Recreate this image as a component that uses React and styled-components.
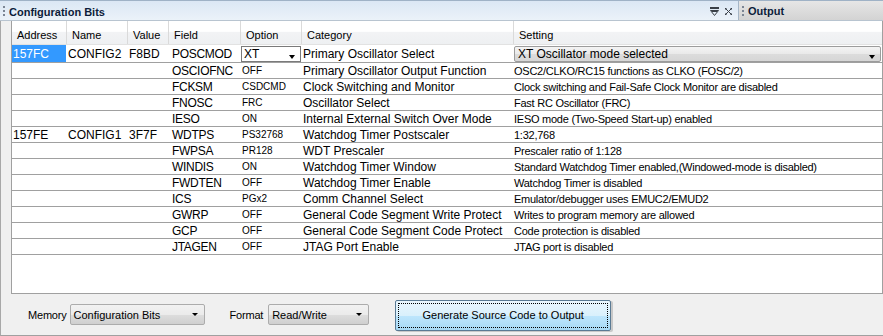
import React from 'react';
import styled, { createGlobalStyle } from 'styled-components';

const Global = createGlobalStyle`
  html, body { margin: 0; padding: 0; background: #f0f0f0; }
  body { font-family: "Liberation Sans", Arial, sans-serif; color: #000; }
  * { box-sizing: border-box; }
`;

const COLS = '54px 61px 41px 72px 61px 212px 1fr';
const PADS = [1, 2, 2, 4, 2, 2, 1];

const Frame = styled.div`
  width: 883px;
  height: 336px;
  background: #f0f0f0;
  display: flex;
  flex-direction: column;
  overflow: hidden;
`;

const TitleRow = styled.div`
  display: flex;
  height: 21px;
  border-top: 1px solid #9fb2c6;
  border-bottom: 1px solid #b8c4d0;
`;

const DockTitle = styled.div`
  flex: 1;
  display: flex;
  align-items: center;
  padding: 2px 0 0 3px;
  background: linear-gradient(#dbe7f4, #ebf2f9);
`;

const OutputTab = styled.div`
  width: 145px;
  display: flex;
  align-items: center;
  padding: 1px 0 0 3px;
  border-left: 1px solid #a6b6c6;
  background: linear-gradient(#e6e6e6, #d3d3d3);
`;

const TitleText = styled.span`
  font-size: 11px;
  font-weight: bold;
  color: #0c1c3a;
  margin-left: 3px;
`;

const TitleIcons = styled.div`
  margin-left: auto;
  margin-right: 6px;
  display: flex;
  align-items: center;
  gap: 6px;
`;

const Body = styled.div`
  display: flex;
  height: 273px;
`;

const LeftStrip = styled.div`
  width: 11px;
  border-left: 1px solid #a8a8a8;
  background: #f0f0f0;
`;

const TablePanel = styled.div`
  flex: 1;
  background: #fff;
  border-left: 1px solid #a0a0a0;
  border-right: 1px solid #a0a0a0;
  border-bottom: 1px solid #a0a0a0;
  display: flex;
  flex-direction: column;
`;

const HeaderRow = styled.div`
  display: grid;
  grid-template-columns: ${COLS};
  height: 24px;
  border-bottom: 1px solid #e2e2e2;
  background: linear-gradient(#ffffff 0%, #ffffff 45%, #f2f3f5 50%, #eef0f2 100%);
`;

const HeaderCell = styled.div`
  font-size: 11px;
  line-height: 13px;
  padding: 8px 0 0 5px;
  border-left: ${p => (p.$first ? 'none' : '1px solid #dadada')};
  white-space: nowrap;
`;

const Row = styled.div`
  display: grid;
  grid-template-columns: ${COLS};
  height: ${p => (p.$tall ? 18 : 16)}px;
  border-bottom: 1px solid #a0a0a0;
`;

const Cell = styled.div`
  display: flex;
  align-items: center;
  padding-left: ${p => p.$pad}px;
  font-size: ${p => p.$size || 12}px;
  letter-spacing: ${p => p.$ls || 0}px;
  white-space: nowrap;
  overflow: hidden;
  background: ${p => (p.$selected ? '#3399ff' : 'transparent')};
  color: ${p => (p.$selected ? '#fff' : '#000')};
`;

const OptionCombo = styled.div`
  flex: 1;
  align-self: stretch;
  margin: 1px 0 0 1px;
  display: flex;
  align-items: center;
  padding-left: 2px;
  background: #fff;
  border: 1px solid #7a7a7a;
  font-size: 12px;
`;

const SettingCombo = styled.div`
  flex: 1;
  align-self: stretch;
  margin: 1px 1px 0 1px;
  display: flex;
  align-items: center;
  padding-left: 3px;
  background: linear-gradient(#f4f4f4, #e9e9e9 50%, #dcdcdc 51%, #d6d6d6);
  border: 1px solid #9c9c9c;
  border-radius: 2px;
  font-size: 12px;
`;

const Arrow = styled.span`
  margin-left: auto;
  margin-right: ${p => p.$mr || 5}px;
  align-self: ${p => (p.$low ? 'flex-end' : 'center')};
  margin-bottom: ${p => (p.$low ? 2 : 0)}px;
  width: 0;
  height: 0;
  border-left: ${p => p.$w / 2}px solid transparent;
  border-right: ${p => p.$w / 2}px solid transparent;
  border-top: ${p => p.$h}px solid #000;
`;

const BottomBar = styled.div`
  height: 42px;
  display: flex;
  align-items: center;
  padding-left: 27px;
  border-left: 1px solid #a8a8a8;
  border-bottom: 1px solid #a0a0a0;
`;

const Label = styled.span`
  font-size: 11px;
  letter-spacing: -0.2px;
  margin-right: ${p => p.$mr}px;
`;

const Select = styled.div`
  width: ${p => p.$w}px;
  height: 21px;
  margin-right: ${p => p.$mr}px;
  display: flex;
  align-items: center;
  padding-left: 3px;
  font-size: 11px;
  background: linear-gradient(#f2f2f2, #ebebeb 50%, #dddddd 51%, #cfcfcf);
  border: 1px solid #acacac;
  border-radius: 2px;
`;

const Button = styled.div`
  position: relative;
  width: 216px;
  height: 31px;
  margin-top: 1px;
  display: flex;
  align-items: center;
  justify-content: center;
  font-size: 11px;
  border: 1px solid #5a7a94;
  border-radius: 2px;
  background: linear-gradient(#eaf6fd, #d9f0fc 50%, #bee6fd 51%, #a7d9f5);
  box-shadow: 2px 1px 0 #c8c8c8;
  &::after {
    content: '';
    position: absolute;
    inset: 2px;
    border: 1px dotted #000;
  }
`;

const Grip = () => (
  <svg width="3" height="11" viewBox="0 0 3 11">
    <rect x="0" y="0" width="2" height="2" fill="#7b8594" />
    <rect x="0" y="4" width="2" height="2" fill="#7b8594" />
    <rect x="0" y="8" width="2" height="2" fill="#7b8594" />
  </svg>
);

const MinimizeIcon = () => (
  <svg width="9" height="9" viewBox="0 0 9 9">
    <rect x="0" y="0" width="9" height="2" fill="#3a4048" />
    <path d="M0.5 3.5 H8.5 L4.5 8.5 Z" fill="none" stroke="#3a4048" strokeWidth="1" />
    <rect x="2" y="4" width="5" height="1" fill="#3a4048" />
  </svg>
);

const CloseIcon = () => (
  <svg width="7" height="7" viewBox="0 0 7 7" shapeRendering="crispEdges">
    {[[0,0],[1,1],[2,2],[3,3],[4,4],[5,5],[6,6],[6,0],[5,1],[4,2],[2,4],[1,5],[0,6],[1,0],[0,1],[5,0],[6,1],[0,5],[1,6],[6,5],[5,6]].map(([x, y], i) => (
      <rect key={i} x={x} y={y} width="1" height="1" fill={(x + y) % 2 === 0 ? '#3a4048' : '#8a929c'} />
    ))}
  </svg>
);

const headers = ['Address', 'Name', 'Value', 'Field', 'Option', 'Category', 'Setting'];

const data = [
  ['', '', '', 'OSCIOFNC', 'OFF', 'Primary Oscillator Output Function', 'OSC2/CLKO/RC15 functions as CLKO (FOSC/2)'],
  ['', '', '', 'FCKSM', 'CSDCMD', 'Clock Switching and Monitor', 'Clock switching and Fail-Safe Clock Monitor are disabled'],
  ['', '', '', 'FNOSC', 'FRC', 'Oscillator Select', 'Fast RC Oscillator (FRC)'],
  ['', '', '', 'IESO', 'ON', 'Internal External Switch Over Mode', 'IESO mode (Two-Speed Start-up) enabled'],
  ['157FE', 'CONFIG1', '3F7F', 'WDTPS', 'PS32768', 'Watchdog Timer Postscaler', '1:32,768'],
  ['', '', '', 'FWPSA', 'PR128', 'WDT Prescaler', 'Prescaler ratio of 1:128'],
  ['', '', '', 'WINDIS', 'ON', 'Watchdog Timer Window', 'Standard Watchdog Timer enabled,(Windowed-mode is disabled)'],
  ['', '', '', 'FWDTEN', 'OFF', 'Watchdog Timer Enable', 'Watchdog Timer is disabled'],
  ['', '', '', 'ICS', 'PGx2', 'Comm Channel Select', 'Emulator/debugger uses EMUC2/EMUD2'],
  ['', '', '', 'GWRP', 'OFF', 'General Code Segment Write Protect', 'Writes to program memory are allowed'],
  ['', '', '', 'GCP', 'OFF', 'General Code Segment Code Protect', 'Code protection is disabled'],
  ['', '', '', 'JTAGEN', 'OFF', 'JTAG Port Enable', 'JTAG port is disabled'],
];

const cellSize = (i) => (i === 4 ? 10 : i === 6 ? 11 : 12);
const cellLs = (i) => (i === 6 ? -0.25 : i === 3 ? -0.3 : 0);

export default function App() {
  return (
    <Frame>
      <Global />
      <TitleRow>
        <DockTitle>
          <Grip />
          <TitleText>Configuration Bits</TitleText>
          <TitleIcons>
            <MinimizeIcon />
            <CloseIcon />
          </TitleIcons>
        </DockTitle>
        <OutputTab>
          <Grip />
          <TitleText>Output</TitleText>
        </OutputTab>
      </TitleRow>
      <Body>
        <LeftStrip />
        <TablePanel>
          <HeaderRow>
            {headers.map((h, i) => (
              <HeaderCell key={h} $first={i === 0}>{h}</HeaderCell>
            ))}
          </HeaderRow>
          <Row $tall>
            <Cell $pad={1} $selected>157FC</Cell>
            <Cell $pad={2}>CONFIG2</Cell>
            <Cell $pad={2}>F8BD</Cell>
            <Cell $pad={4} $ls={-0.3}>POSCMOD</Cell>
            <Cell $pad={0}>
              <OptionCombo>
                XT
                <Arrow $w={7} $h={4} $low />
              </OptionCombo>
            </Cell>
            <Cell $pad={2}>Primary Oscillator Select</Cell>
            <Cell $pad={0}>
              <SettingCombo>
                XT Oscillator mode selected
                <Arrow $w={7} $h={4} $low />
              </SettingCombo>
            </Cell>
          </Row>
          {data.map((r, ri) => (
            <Row key={ri}>
              {r.map((v, i) => (
                <Cell key={i} $pad={PADS[i]} $size={cellSize(i)} $ls={cellLs(i)}>{v}</Cell>
              ))}
            </Row>
          ))}
        </TablePanel>
      </Body>
      <BottomBar>
        <Label $mr={3}>Memory</Label>
        <Select $w={135} $mr={25}>
          Configuration Bits
          <Arrow $w={6} $h={3} $mr={6} />
        </Select>
        <Label $mr={5}>Format</Label>
        <Select $w={101} $mr={26}>
          Read/Write
          <Arrow $w={6} $h={3} $mr={6} />
        </Select>
        <Button>Generate Source Code to Output</Button>
      </BottomBar>
    </Frame>
  );
}
